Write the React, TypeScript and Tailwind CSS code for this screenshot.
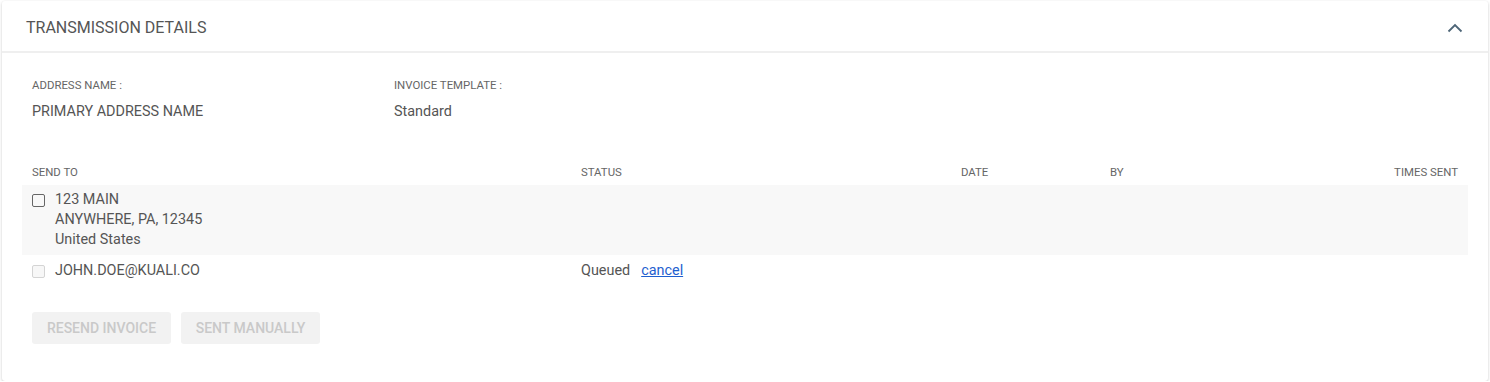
import React from 'react';

const FONT = { fontFamily: 'Roboto, "Liberation Sans", Arial, sans-serif' };

function ChevronUp() {
  return (
    <svg width="16" height="10" viewBox="0 0 16 10" fill="none" aria-hidden>
      <path d="M1.5 8.5 8 2l6.5 6.5" stroke="#4d6577" strokeWidth="1.8" />
    </svg>
  );
}

function Box({ disabled }: { disabled?: boolean }) {
  return (
    <span
      className={
        disabled
          ? 'mt-[4px] block h-[13px] w-[13px] shrink-0 rounded-[2px] border border-[#d4d4d4] bg-[#f7f7f7]'
          : 'mt-[4px] block h-[13px] w-[13px] shrink-0 rounded-[2px] border border-[#666]'
      }
    />
  );
}

export default function App() {
  return (
    <div className="bg-white pt-[1px]" style={FONT}>
      <section className="mx-[2px] rounded-[3px] bg-white shadow-[0_1px_3px_rgba(0,0,0,0.22)]">
        <header className="flex h-[52px] items-center justify-between border-b-2 border-[#efefef] pl-[24px] pr-[25px] pt-[4px]">
          <h2 className="text-[16px] text-[#555]">TRANSMISSION DETAILS</h2>
          <ChevronUp />
        </header>

        <div className="px-[20px] pb-[37px] pt-[26px]">
          <div className="flex px-[10px]">
            <div className="w-[362px]">
              <p className="text-[11.4px] leading-[13px] text-[#666]">ADDRESS NAME :</p>
              <p className="mt-[10px] text-[14.4px] leading-[20px] text-[#555]">PRIMARY ADDRESS NAME</p>
            </div>
            <div>
              <p className="text-[11.4px] leading-[13px] text-[#666]">INVOICE TEMPLATE :</p>
              <p className="mt-[10px] text-[14.4px] leading-[20px] text-[#555]">Standard</p>
            </div>
          </div>

          <div className="mt-[44px] text-[14.4px] leading-[20px] text-[#555]">
            <div className="grid grid-cols-[549px_380px_149px_1fr_auto] px-[10px] pb-[6px] text-[11.4px] leading-[13px] text-[#666]">
              <span>SEND TO</span>
              <span>STATUS</span>
              <span>DATE</span>
              <span>BY</span>
              <span>TIMES SENT</span>
            </div>
            <div className="grid grid-cols-[549px_380px_149px_1fr_auto] bg-[#f8f8f8] px-[10px] py-[5px]">
              <div className="flex gap-[10px]">
                <Box />
                <div>
                  <p>123 MAIN</p>
                  <p>ANYWHERE, PA, 12345</p>
                  <p>United States</p>
                </div>
              </div>
              <span />
              <span />
              <span />
              <span />
            </div>
            <div className="grid grid-cols-[549px_380px_149px_1fr_auto] px-[10px] pb-[4px] pt-[6px]">
              <div className="flex gap-[10px]">
                <Box disabled />
                <p>JOHN.DOE@KUALI.CO</p>
              </div>
              <div>
                Queued
                <a href="#" className="ml-[11px] text-[#1f5fcf] underline">
                  cancel
                </a>
              </div>
              <span />
              <span />
              <span />
            </div>
          </div>

          <div className="mt-[27px] flex gap-[10px] px-[10px]">
            <button
              type="button"
              disabled
              className="h-[32px] w-[139px] rounded-[3px] bg-[#f2f2f2] text-[14px] font-medium text-[#c9c9c9]"
            >
              RESEND INVOICE
            </button>
            <button
              type="button"
              disabled
              className="h-[32px] w-[139px] rounded-[3px] bg-[#f2f2f2] text-[14px] font-medium text-[#c9c9c9]"
            >
              SENT MANUALLY
            </button>
          </div>
        </div>
      </section>
    </div>
  );
}
